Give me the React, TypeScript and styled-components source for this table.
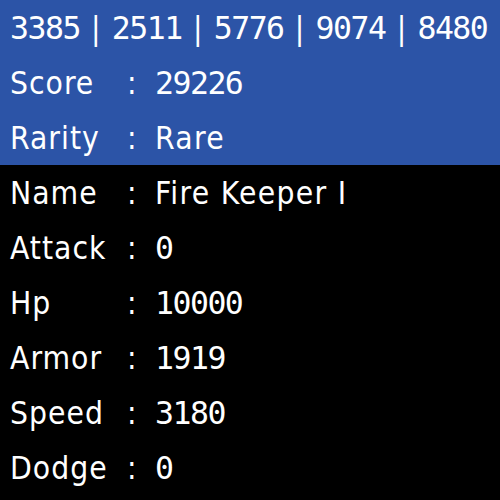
import React from "react";
import styled, { createGlobalStyle } from "styled-components";

const Global = createGlobalStyle`
  html, body { margin: 0; padding: 0; background: #000; }
  body { font-family: "DejaVu Sans Condensed", "DejaVu Sans", sans-serif; color: #fff; }
`;

const Panel = styled.div`
  width: 500px;
  height: 500px;
  background: #000;
  display: flex;
  flex-direction: column;
`;

const Header = styled.div`
  background: #2c54a7;
  display: flex;
  flex-direction: column;
`;

const Row = styled.div`
  height: 55px;
  display: grid;
  grid-template-columns: 113px 32px 1fr;
  align-items: center;
  padding-left: 10px;
  font-size: 31.5px;
  white-space: nowrap;
`;

const StatsLine = styled.div`
  height: 55px;
  display: flex;
  align-items: center;
  padding-left: 10px;
  font-size: 31.5px;
  white-space: nowrap;
`;

const Label = styled.span`
  letter-spacing: 1px;
`;

const Colon = styled.span`
  padding-left: 4px;
`;

const Num = styled.span`
  font-family: "DejaVu Sans Mono", monospace;
  letter-spacing: -1.5px;
`;

const Text = styled.span`
  font-family: "DejaVu Sans Condensed", "DejaVu Sans", sans-serif;
  letter-spacing: 1.3px;
`;

const Sep = styled.span`
  display: inline-block;
  width: 32px;
  text-align: center;
`;

const rowsTop = [
  { label: "Score", value: "29226", mono: true },
  { label: "Rarity", value: "Rare", mono: false },
];

const rowsBottom = [
  { label: "Name", value: "Fire Keeper I", mono: false },
  { label: "Attack", value: "0", mono: true },
  { label: "Hp", value: "10000", mono: true },
  { label: "Armor", value: "1919", mono: true },
  { label: "Speed", value: "3180", mono: true },
  { label: "Dodge", value: "0", mono: true },
];

const stats = ["3385", "2511", "5776", "9074", "8480"];

function InfoRow({ label, value, mono }: { label: string; value: string; mono: boolean }) {
  return (
    <Row>
      <Label>{label}</Label>
      <Colon>:</Colon>
      {mono ? <Num>{value}</Num> : <Text>{value}</Text>}
    </Row>
  );
}

export default function App() {
  return (
    <>
      <Global />
      <Panel>
        <Header>
          <StatsLine>
            {stats.map((s, i) => (
              <React.Fragment key={s}>
                {i > 0 && <Sep>|</Sep>}
                <Num>{s}</Num>
              </React.Fragment>
            ))}
          </StatsLine>
          {rowsTop.map((r) => (
            <InfoRow key={r.label} {...r} />
          ))}
        </Header>
        {rowsBottom.map((r) => (
          <InfoRow key={r.label} {...r} />
        ))}
      </Panel>
    </>
  );
}
